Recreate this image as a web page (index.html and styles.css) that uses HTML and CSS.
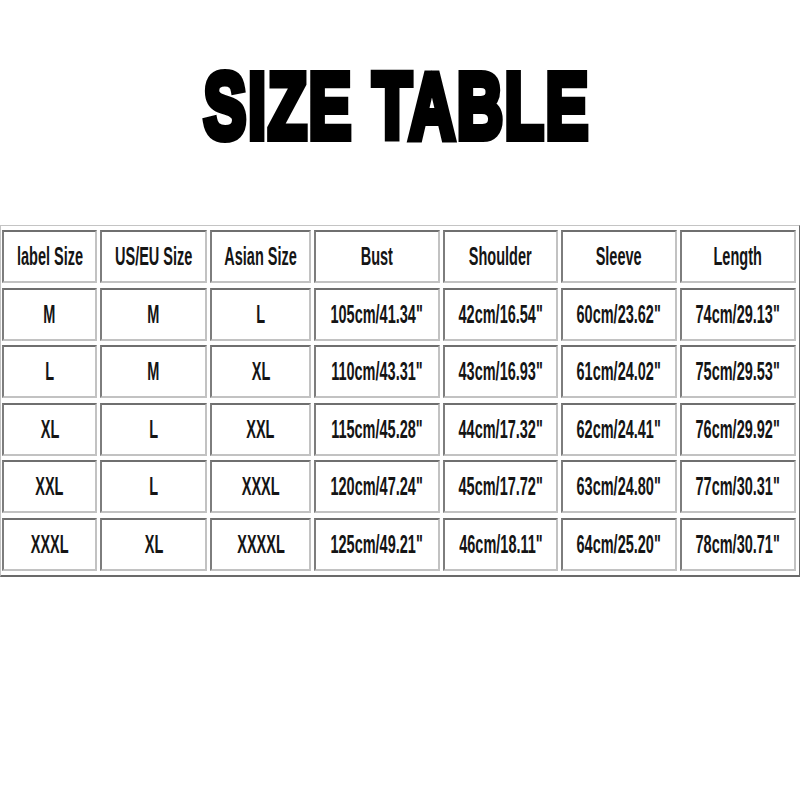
FILE: index.html
```html
<!DOCTYPE html>
<html>
<head>
<meta charset="utf-8">
<link rel="stylesheet" href="styles.css">
</head>
<body>
<div class="page">
  <h1 class="title"><span class="title-text">SIZE TABLE</span></h1>
  <div class="size-table">
    <div class="cell"><span class="txt">label Size</span></div>
    <div class="cell"><span class="txt">US/EU Size</span></div>
    <div class="cell"><span class="txt">Asian Size</span></div>
    <div class="cell"><span class="txt">Bust</span></div>
    <div class="cell"><span class="txt">Shoulder</span></div>
    <div class="cell"><span class="txt">Sleeve</span></div>
    <div class="cell"><span class="txt">Length</span></div>

    <div class="cell"><span class="txt">M</span></div>
    <div class="cell"><span class="txt">M</span></div>
    <div class="cell"><span class="txt">L</span></div>
    <div class="cell"><span class="txt">105cm/41.34"</span></div>
    <div class="cell"><span class="txt">42cm/16.54"</span></div>
    <div class="cell"><span class="txt">60cm/23.62"</span></div>
    <div class="cell"><span class="txt">74cm/29.13"</span></div>

    <div class="cell"><span class="txt">L</span></div>
    <div class="cell"><span class="txt">M</span></div>
    <div class="cell"><span class="txt">XL</span></div>
    <div class="cell"><span class="txt">110cm/43.31"</span></div>
    <div class="cell"><span class="txt">43cm/16.93"</span></div>
    <div class="cell"><span class="txt">61cm/24.02"</span></div>
    <div class="cell"><span class="txt">75cm/29.53"</span></div>

    <div class="cell"><span class="txt">XL</span></div>
    <div class="cell"><span class="txt">L</span></div>
    <div class="cell"><span class="txt">XXL</span></div>
    <div class="cell"><span class="txt">115cm/45.28"</span></div>
    <div class="cell"><span class="txt">44cm/17.32"</span></div>
    <div class="cell"><span class="txt">62cm/24.41"</span></div>
    <div class="cell"><span class="txt">76cm/29.92"</span></div>

    <div class="cell"><span class="txt">XXL</span></div>
    <div class="cell"><span class="txt">L</span></div>
    <div class="cell"><span class="txt">XXXL</span></div>
    <div class="cell"><span class="txt">120cm/47.24"</span></div>
    <div class="cell"><span class="txt">45cm/17.72"</span></div>
    <div class="cell"><span class="txt">63cm/24.80"</span></div>
    <div class="cell"><span class="txt">77cm/30.31"</span></div>

    <div class="cell"><span class="txt">XXXL</span></div>
    <div class="cell"><span class="txt">XL</span></div>
    <div class="cell"><span class="txt">XXXXL</span></div>
    <div class="cell"><span class="txt">125cm/49.21"</span></div>
    <div class="cell"><span class="txt">46cm/18.11"</span></div>
    <div class="cell"><span class="txt">64cm/25.20"</span></div>
    <div class="cell"><span class="txt">78cm/30.71"</span></div>
  </div>
</div>
</body>
</html>
```

FILE: styles.css
```css
html, body {
  margin: 0;
  padding: 0;
  background: #ffffff;
}

.page {
  width: 800px;
  height: 800px;
  display: flex;
  flex-direction: column;
  font-family: "Liberation Sans", Arial, sans-serif;
}

.title {
  margin: 0;
  height: 225px;
  display: flex;
  justify-content: center;
  align-items: flex-start;
  padding-top: 60px;
  padding-right: 6px;
  box-sizing: border-box;
}

.title-text {
  display: inline-block;
  font-size: 92px;
  font-weight: 700;
  line-height: 1;
  color: #000;
  -webkit-text-stroke: 8px #000;
  letter-spacing: 3px;
  transform: scaleX(0.69);
  white-space: nowrap;
}

.size-table {
  display: grid;
  grid-template-columns: 95px 107px 101px 126px 115px 116px 116px;
  grid-auto-rows: 53px;
  column-gap: 3px;
  row-gap: 4.5px;
  width: 800px;
  box-sizing: border-box;
  padding: 4px 3px 4px 1px;
  border-top: 1px solid #c4c4c4;
  border-left: 1px solid #c4c4c4;
  border-right: 1px solid #6a6a6a;
  border-bottom: 2px solid #6a6a6a;
}

.cell {
  display: flex;
  justify-content: center;
  align-items: center;
  box-sizing: border-box;
  border-top: 2px solid #6f6f6f;
  border-left: 2px solid #7d7d7d;
  border-bottom: 2px solid #c2c2c2;
  border-right: 2px solid #c2c2c2;
  background: #fff;
  overflow: visible;
}

.txt {
  display: inline-block;
  font-size: 25px;
  font-weight: 700;
  line-height: 1;
  color: #151515;
  white-space: nowrap;
  transform: scaleX(0.58);
}
```
